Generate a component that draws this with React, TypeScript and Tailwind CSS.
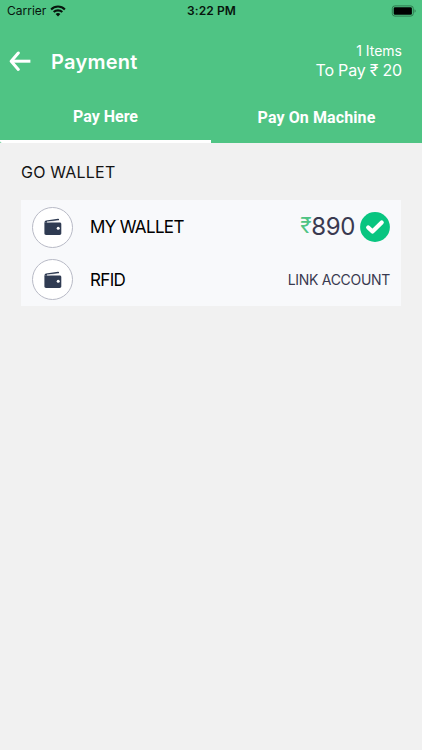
import React from 'react';

const WifiIcon: React.FC = () => (
  <svg width="16" height="12" viewBox="0 0 16 12" fill="none" stroke="#07150d" strokeWidth="2.1">
    <path d="M1.1 4.4a9.8 9.8 0 0 1 13.8 0" />
    <path d="M3.7 7.1a6.1 6.1 0 0 1 8.6 0" />
    <path d="M8 11.5 5.6 9.1a3.4 3.4 0 0 1 4.8 0z" fill="#07150d" stroke="none" />
  </svg>
);

const BatteryIcon: React.FC = () => (
  <svg width="26" height="12" viewBox="0 0 26 12">
    <rect x="1.3" y="0.9" width="21" height="10.2" rx="2.6" fill="none" stroke="#2f7a4f" strokeWidth="1" />
    <rect x="2.7" y="2.3" width="18.2" height="7.4" rx="1.3" fill="#000" />
    <path d="M23.6 4.2c1.3.6 1.3 3 0 3.6z" fill="#2b7048" />
  </svg>
);

const BackIcon: React.FC = () => (
  <svg
    width="22"
    height="20"
    viewBox="0 0 22 20"
    fill="none"
    stroke="#fff"
    strokeWidth="3"
    strokeLinecap="round"
    strokeLinejoin="round"
  >
    <path d="M9.3 2 2.2 10.2l7.1 8.2" />
    <path d="M2.4 10.2h19" strokeLinecap="butt" />
  </svg>
);

const WalletIcon: React.FC = () => (
  <div className="flex h-[41px] w-[41px] shrink-0 items-center justify-center rounded-full border border-[#b8bac6] bg-white">
    <svg width="18" height="18" viewBox="0 0 18 18" fill="#2f3b52">
      <path d="M.5 4.6c0-1.3.5-1.9 1.6-2.1L14 .8c.7-.1 1.1.3 1.1.8 0 .6-.3.9-.9 1L3 4.3l-.4.5z" />
      <path d="M.4 4.4h15.2c1.1 0 1.7.6 1.7 1.6v9.3c0 1-.6 1.6-1.7 1.6H2.1c-1.1 0-1.7-.6-1.7-1.6z" />
      <path d="M3 3.9 14.6 2.8" stroke="#fff" strokeWidth="0.8" />
      <circle cx="14.2" cy="10.3" r="1.5" fill="#fff" />
    </svg>
  </div>
);

const CheckIcon: React.FC = () => (
  <svg width="30" height="30" viewBox="0 0 30 30">
    <circle cx="15" cy="15" r="14.9" fill="#08c580" />
    <path
      d="m8.2 15.4 4.3 4.1 9.2-9.1"
      fill="none"
      stroke="#fff"
      strokeWidth="4.2"
      strokeLinecap="round"
      strokeLinejoin="round"
    />
  </svg>
);

const App: React.FC = () => {
  return (
    <div className="min-h-screen bg-[#f1f1f1] font-['Inter',sans-serif]">
      <div className="h-[143px] bg-[#4fc484]">
        {/* Status bar */}
        <div className="grid h-[21px] grid-cols-3 items-center pl-[7px] pr-[5px] text-[#07150d]">
          <div className="flex items-center gap-1">
            <span className="text-[12px] leading-none">Carrier</span>
            <WifiIcon />
          </div>
          <div className="pr-px text-center text-[12px] font-semibold leading-none tracking-[0.1px]">3:22 PM</div>
          <div className="flex justify-end">
            <BatteryIcon />
          </div>
        </div>

        {/* Header */}
        <div className="flex h-[70px] items-center justify-between pl-[9px] pr-5 pt-[10px] text-white">
          <div className="flex items-center gap-5">
            <BackIcon />
            <h1 className="pt-0.5 text-[20px] font-semibold leading-6 tracking-[0.25px]">Payment</h1>
          </div>
          <div className="text-right">
            <div className="text-[14px] leading-[18px]">1 Items</div>
            <div className="text-[16px] leading-5 tracking-[-0.2px]">To Pay ₹ 20</div>
          </div>
        </div>

        {/* Tabs */}
        <div className="grid h-[52px] grid-cols-2 font-['Roboto',sans-serif] text-[16px] font-bold text-white">
          <button className="rounded-bl-xs border-b-[3px] border-white pt-[2px]">Pay Here</button>
          <button className="pt-[2px] tracking-[0.1px]">Pay On Machine</button>
        </div>
      </div>

      <div className="px-[21px]">
        <h2 className="pt-[17px] text-[16px] leading-6 tracking-[0.2px] text-[#141414]">GO WALLET</h2>

        <div className="mt-4 h-[106px] w-[380px] bg-[#f8f9fb] text-black">
          <div className="flex h-[53px] items-center justify-between px-[11px] pt-px">
            <div className="flex items-center gap-[17px]">
              <WalletIcon />
              <span className="pt-0.5 text-[17px] tracking-[-0.65px]">MY WALLET</span>
            </div>
            <div className="flex items-center gap-[5px]">
              <div className="flex items-center text-[24px] leading-none tracking-[-0.4px] text-[#3a3a50]">
                <span className="pb-1 text-[21px] leading-none text-[#4fc484]">₹</span>
                <span>890</span>
              </div>
              <CheckIcon />
            </div>
          </div>
          <div className="flex h-[53px] items-center justify-between px-[11px]">
            <div className="flex items-center gap-[17px]">
              <WalletIcon />
              <span className="pt-0.5 text-[17px] tracking-[-0.65px]">RFID</span>
            </div>
            <span className="text-[14px] tracking-[-0.3px] text-[#3a3a50]">LINK ACCOUNT</span>
          </div>
        </div>
      </div>
    </div>
  );
};

export default App;
